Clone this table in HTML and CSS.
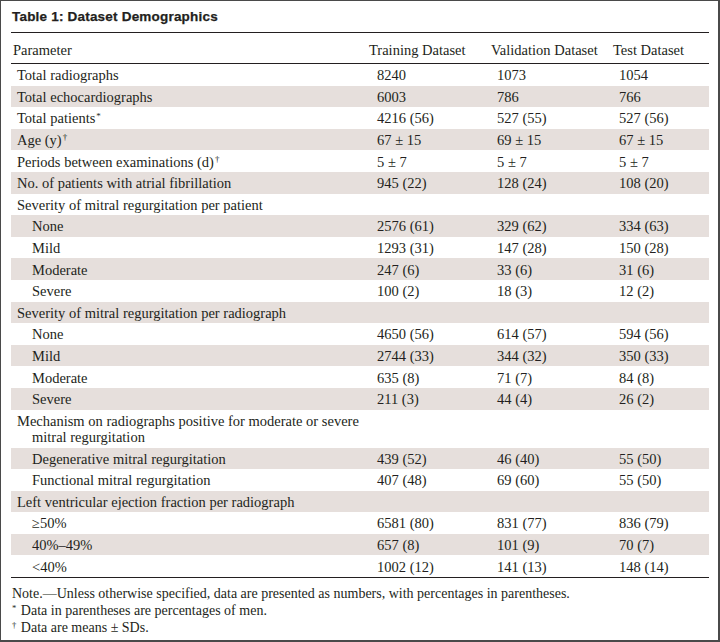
FILE: index.html
```html
<!DOCTYPE html>
<html lang="en">
<head>
<meta charset="utf-8">
<title>Table 1: Dataset Demographics</title>
<link rel="stylesheet" href="styles.css">
</head>
<body>
<div class="frame">
  <h1 class="title">Table 1: Dataset Demographics</h1>
  <table class="data">
    <colgroup>
      <col class="c1"><col class="c2"><col class="c3"><col class="c4">
    </colgroup>
    <thead>
      <tr><th>Parameter</th><th>Training Dataset</th><th>Validation Dataset</th><th>Test Dataset</th></tr>
    </thead>
    <tbody>
      <tr><td>Total radiographs</td><td>8240</td><td>1073</td><td>1054</td></tr>
      <tr class="sh"><td>Total echocardiographs</td><td>6003</td><td>786</td><td>766</td></tr>
      <tr><td>Total patients<sup>*</sup></td><td>4216 (56)</td><td>527 (55)</td><td>527 (56)</td></tr>
      <tr class="sh"><td>Age (y)<sup>†</sup></td><td>67 ± 15</td><td>69 ± 15</td><td>67 ± 15</td></tr>
      <tr><td>Periods between examinations (d)<sup>†</sup></td><td>5 ± 7</td><td>5 ± 7</td><td>5 ± 7</td></tr>
      <tr class="sh"><td>No. of patients with atrial fibrillation</td><td>945 (22)</td><td>128 (24)</td><td>108 (20)</td></tr>
      <tr><td>Severity of mitral regurgitation per patient</td><td></td><td></td><td></td></tr>
      <tr class="sh"><td class="ind">None</td><td>2576 (61)</td><td>329 (62)</td><td>334 (63)</td></tr>
      <tr><td class="ind">Mild</td><td>1293 (31)</td><td>147 (28)</td><td>150 (28)</td></tr>
      <tr class="sh"><td class="ind">Moderate</td><td>247 (6)</td><td>33 (6)</td><td>31 (6)</td></tr>
      <tr><td class="ind">Severe</td><td>100 (2)</td><td>18 (3)</td><td>12 (2)</td></tr>
      <tr class="sh"><td>Severity of mitral regurgitation per radiograph</td><td></td><td></td><td></td></tr>
      <tr><td class="ind">None</td><td>4650 (56)</td><td>614 (57)</td><td>594 (56)</td></tr>
      <tr class="sh"><td class="ind">Mild</td><td>2744 (33)</td><td>344 (32)</td><td>350 (33)</td></tr>
      <tr><td class="ind">Moderate</td><td>635 (8)</td><td>71 (7)</td><td>84 (8)</td></tr>
      <tr class="sh"><td class="ind">Severe</td><td>211 (3)</td><td>44 (4)</td><td>26 (2)</td></tr>
      <tr><td class="hang">Mechanism on radiographs positive for moderate or severe<br>mitral regurgitation</td><td></td><td></td><td></td></tr>
      <tr class="sh"><td class="ind">Degenerative mitral regurgitation</td><td>439 (52)</td><td>46 (40)</td><td>55 (50)</td></tr>
      <tr><td class="ind">Functional mitral regurgitation</td><td>407 (48)</td><td>69 (60)</td><td>55 (50)</td></tr>
      <tr class="sh"><td>Left ventricular ejection fraction per radiograph</td><td></td><td></td><td></td></tr>
      <tr><td class="ind">≥50%</td><td>6581 (80)</td><td>831 (77)</td><td>836 (79)</td></tr>
      <tr class="sh"><td class="ind">40%–49%</td><td>657 (8)</td><td>101 (9)</td><td>70 (7)</td></tr>
      <tr><td class="ind">&lt;40%</td><td>1002 (12)</td><td>141 (13)</td><td>148 (14)</td></tr>
    </tbody>
  </table>
  <div class="notes">
    <p>Note.—Unless otherwise specified, data are presented as numbers, with percentages in parentheses.</p>
    <p><sup>*</sup> Data in parentheses are percentages of men.</p>
    <p><sup>†</sup> Data are means ± SDs.</p>
  </div>
</div>
</body>
</html>
```

FILE: styles.css
```css
html, body {
  margin: 0;
  padding: 0;
  background: #ffffff;
}

.frame {
  box-sizing: border-box;
  width: 720px;
  height: 642px;
  border: 2px solid #4a4a4a;
  border-left-width: 1px;
  border-top-width: 1px;
  padding: 8px 9px 0 10px;
  color: #231f20;
  font-family: "Liberation Serif", "Times New Roman", serif;
}

.title {
  margin: 0;
  font-family: "Liberation Sans", Arial, sans-serif;
  font-weight: 700;
  font-size: 13.5px;
  line-height: 16px;
  letter-spacing: 0.2px;
  -webkit-text-stroke: 0.25px #231f20;
  padding-left: 1px;
}

.data {
  width: 698px;
  margin-top: 7px;
  border-collapse: collapse;
  table-layout: fixed;
  font-size: 14.5px;
  line-height: 16.4px;
  border-top: 1px solid #231f20;
  border-bottom: 1.5px solid #231f20;
}

.c1 { width: 358px; }
.c2 { width: 122px; }
.c3 { width: 122px; }
.c4 { width: 96px; }

.data th {
  font-weight: 400;
  text-align: left;
  padding: 8.6px 0 5px 0;
  border-bottom: 1px solid #231f20;
  white-space: nowrap;
}

.data th:first-child {
  padding-left: 2px;
}

.data td {
  padding: 3.2px 0 2px 6px;
  vertical-align: top;
  white-space: nowrap;
}

.data td:nth-child(2) {
  padding-left: 8px;
}

.data td.ind {
  padding-left: 21px;
}

.data td.hang {
  padding-left: 21px;
  text-indent: -15px;
}

.data tr.sh td {
  background: #e6dfdc;
}

sup {
  font-size: 0.62em;
  line-height: 0;
  vertical-align: 0.5em;
  margin-left: 1px;
}

.notes {
  padding-top: 7px;
  font-size: 14px;
  line-height: 17px;
}

.notes p {
  margin: 0 0 0 1px;
}

.notes sup {
  margin-left: 0;
  margin-right: 1px;
}
```
